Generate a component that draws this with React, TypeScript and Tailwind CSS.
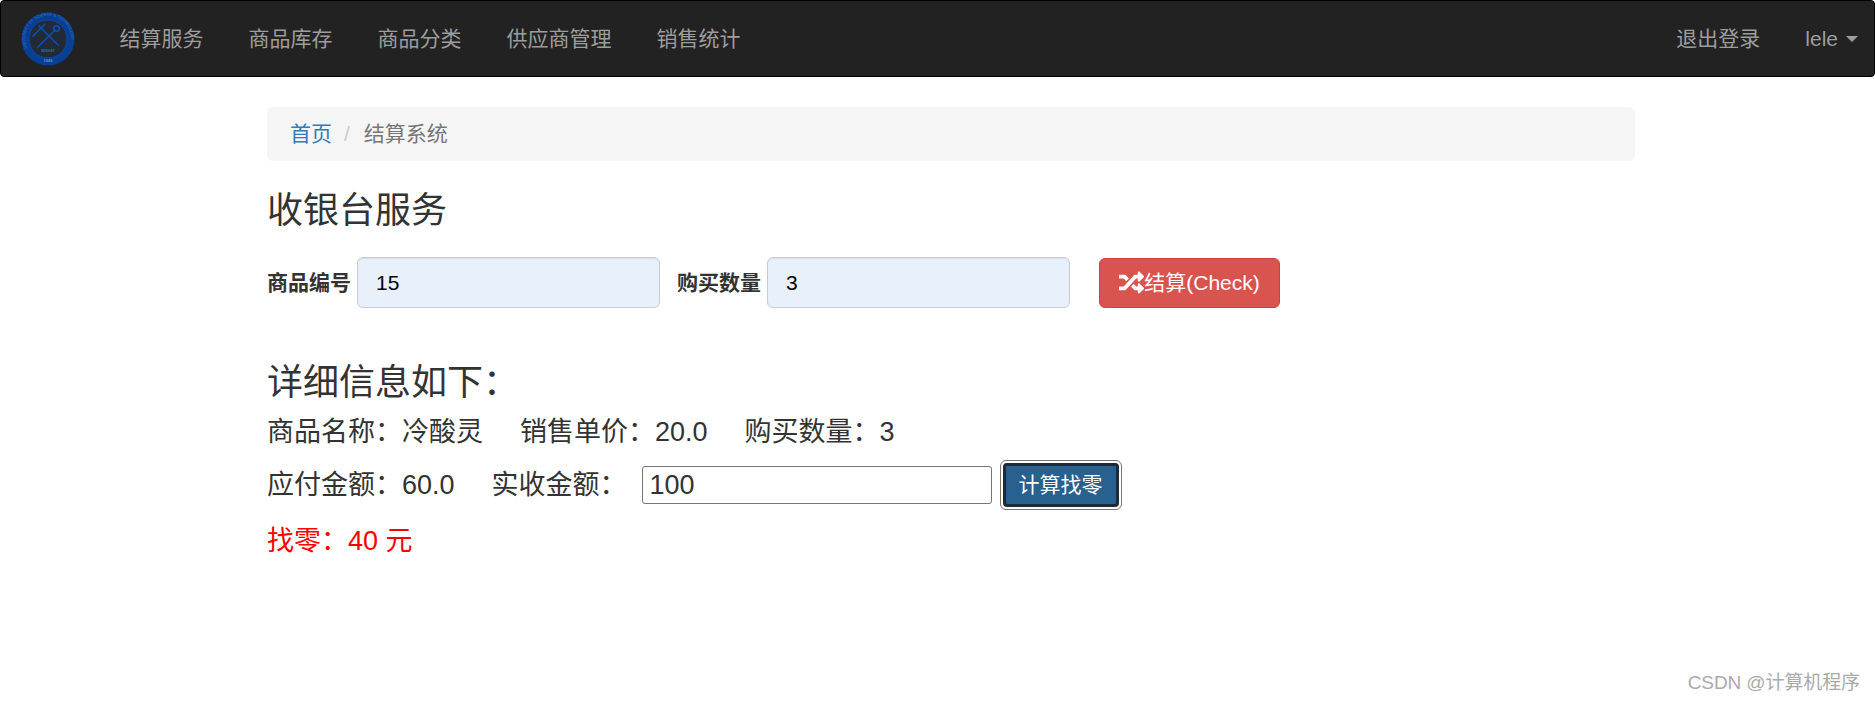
import { FaRandom } from "react-icons/fa";

const font = { fontFamily: '"Liberation Sans", "Noto Sans CJK SC", sans-serif' };

function Logo() {
  return (
    <svg width="56" height="56" viewBox="0 0 56 56" className="shrink-0">
      <defs>
        <path id="seal-ring" d="M7 37 A23 23 0 1 1 49 37" fill="none" />
      </defs>
      <circle cx="28" cy="28" r="26.5" fill="#073f92" />
      <circle cx="28" cy="28" r="19" fill="#222a38" stroke="#0a48a8" strokeWidth="1" />
      <text fontSize="4" fill="#2f62b4" fontFamily="Liberation Sans" fontWeight="700">
        <textPath href="#seal-ring">UNIVERSITY OF SCIENCE &amp; TECHNOLOGY</textPath>
      </text>
      <g stroke="#0a4fb4" fill="none" strokeLinecap="round">
        <path d="M18 36 L35 19" strokeWidth="1.6" />
        <path d="M19 15 L38 34" strokeWidth="1.6" />
        <circle cx="36.5" cy="17.5" r="2.8" strokeWidth="1.6" />
        <path d="M13 25 L25 13" strokeWidth="1.6" />
      </g>
      <text x="28" y="41" fontSize="3.4" fill="#2a65c4" textAnchor="middle" fontFamily="Liberation Sans" fontWeight="700">
        BEEHAT
      </text>
      <text x="28" y="51" fontSize="4" fill="#6f92d0" textAnchor="middle" fontFamily="Liberation Sans" fontWeight="700">
        1949
      </text>
    </svg>
  );
}

const navItems = ["结算服务", "商品库存", "商品分类", "供应商管理", "销售统计"];

export default function App() {
  return (
    <div className="relative min-h-[701px] bg-white text-[21px] text-[#333]" style={font}>
      <nav className="flex h-[77px] items-center rounded-[4px] border border-black bg-[#222222] pl-[19px] pr-[16px] text-[#9d9d9d]">
        <Logo />
        <div className="ml-[21px] flex">
          {navItems.map((item) => (
            <a key={item} className="px-[22.5px] leading-none">
              {item}
            </a>
          ))}
        </div>
        <div className="ml-auto flex items-center">
          <a className="leading-none">退出登录</a>
          <a className="ml-[45px] flex items-center leading-none">
            lele
            <span className="ml-[8px] h-0 w-0 border-x-[6px] border-t-[6px] border-x-transparent border-t-[#9d9d9d]" />
          </a>
        </div>
      </nav>

      <main className="ml-[267px] w-[1368px] pt-[30px]">
        <div className="flex h-[54px] items-center rounded-[6px] bg-[#f5f5f5] px-[23px]">
          <a className="text-[#337ab7]">首页</a>
          <span className="pl-[12px] pr-[14px] text-[#cccccc]">/</span>
          <span className="text-[#777777]">结算系统</span>
        </div>

        <h3 className="mt-[30px] text-[36px] leading-[40px] font-normal">收银台服务</h3>

        <form className="mt-[26px] flex items-center">
          <label className="font-bold">商品编号</label>
          <input
            readOnly
            value="15"
            className="ml-[6px] h-[51px] w-[303px] rounded-[6px] border border-[#cccccc] bg-[#e8f0fb] px-[18px] text-[21px] text-black shadow-[inset_0_1px_1px_rgba(0,0,0,0.075)] outline-none"
          />
          <label className="ml-[17px] font-bold">购买数量</label>
          <input
            readOnly
            value="3"
            className="ml-[6px] h-[51px] w-[303px] rounded-[6px] border border-[#cccccc] bg-[#e8f0fb] px-[18px] text-[21px] text-black shadow-[inset_0_1px_1px_rgba(0,0,0,0.075)] outline-none"
          />
          <button
            type="button"
            className="ml-[29px] flex h-[50px] w-[181px] items-center justify-center rounded-[6px] border border-[#d43f3a] bg-[#d9534f] text-[21px] text-white"
          >
            <FaRandom className="text-[25px]" />
            结算(Check)
          </button>
        </form>

        <h3 className="mt-[55px] text-[36px] leading-[40px] font-normal">详细信息如下：</h3>

        <div className="mt-[9px] flex h-[40px] items-center text-[27px]">
          <span>商品名称：冷酸灵</span>
          <span className="ml-[37px]">销售单价：20.0</span>
          <span className="ml-[37px]">购买数量：3</span>
        </div>

        <div className="mt-[8px] flex h-[50px] items-center text-[27px]">
          <span>应付金额：60.0</span>
          <span className="ml-[37px]">实收金额：</span>
          <input
            readOnly
            value="100"
            className="ml-[15px] h-[38px] w-[350px] rounded-[3px] border border-[#767676] bg-white px-[7px] text-[27px] text-[#333] outline-none"
          />
          <button
            type="button"
            className="ml-[8px] h-[50px] w-[122px] rounded-[6px] border border-[#767676] bg-white p-[2px]"
          >
            <span className="flex h-full w-full items-center justify-center rounded-[4px] border-[3px] border-[#1f2a36] bg-[#286090] text-[21px] text-white">
              计算找零
            </span>
          </button>
        </div>

        <p className="mt-[11px] text-[27px] leading-[40px] text-[#ff0000]">找零：40 元</p>
      </main>

      <span className="absolute right-[15px] bottom-[6px] text-[19px] leading-[24px] tracking-[-0.1px] text-[#aaaaaa]">CSDN @计算机程序</span>
    </div>
  );
}
